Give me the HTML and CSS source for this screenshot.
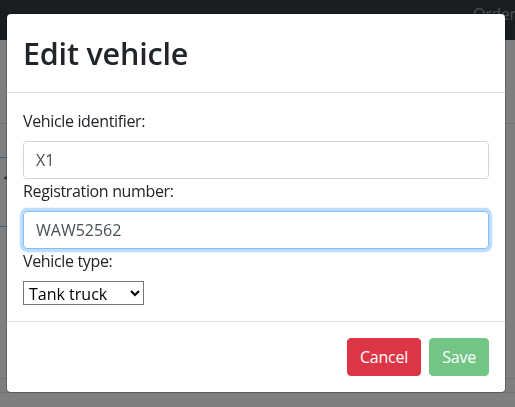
FILE: index.html
```html
<!DOCTYPE html>
<html lang="en">
<head>
<meta charset="utf-8">
<title>Edit vehicle</title>
<link rel="stylesheet" href="styles.css">
</head>
<body>
<nav class="navbar">
  <span class="nav-link">Orders</span>
</nav>
<main class="page">
  <div class="row row-a"></div>
  <div class="row row-b"><span class="pager">&lt;</span></div>
  <div class="row row-c"></div>
  <div class="row row-d"></div>
</main>
<div class="backdrop"></div>
<div class="modal">
  <div class="modal-dialog">
    <div class="modal-content">
      <div class="modal-header">
        <h2 class="modal-title">Edit vehicle</h2>
      </div>
      <div class="modal-body">
        <label class="form-label" for="vid">Vehicle identifier:</label>
        <input class="form-control" id="vid" type="text" value="X1">
        <label class="form-label" for="reg">Registration number:</label>
        <input class="form-control is-focused" id="reg" type="text" value="WAW52562">
        <label class="form-label" for="vtype">Vehicle type:</label>
        <select class="form-select" id="vtype">
          <option>Tank truck</option>
          <option>Box truck</option>
          <option>Trailer</option>
        </select>
      </div>
      <div class="modal-footer">
        <button class="btn btn-danger" type="button">Cancel</button>
        <button class="btn btn-success" type="button" disabled>Save</button>
      </div>
    </div>
  </div>
</div>
</body>
</html>
```
FILE: styles.css
```css
* { box-sizing: border-box; }

body {
  margin: 0;
  font-family: "Segoe UI", "Open Sans", "Noto Sans", sans-serif;
  font-size: 16px;
  line-height: 1.5;
  color: #212529;
  background: #fff;
  overflow: hidden;
}

.navbar {
  height: 40px;
  background: #343a40;
  display: flex;
  justify-content: flex-end;
  padding: 2px 0 0 0;
}

.nav-link {
  color: rgba(255, 255, 255, 0.5);
  margin-right: -8px;
  line-height: 24px;
  letter-spacing: -0.3px;
}

.page {
  padding: 0;
}

.row { border-bottom: 1px solid #dee2e6; }
.row-a { height: 84px; }
.row-b {
  height: 70px;
  margin-top: 33px;
  border: 1px solid #80bdff;
  border-radius: 4px;
  margin-left: -20px;
  width: 40px;
}
.pager {
  display: block;
  padding: 8px 0 0 22px;
  color: #495057;
}
.row-c { height: 152px; }
.row-d { height: 14px; }

.backdrop {
  position: fixed;
  inset: 0;
  background: rgba(0, 0, 0, 0.5);
}

.modal {
  position: fixed;
  inset: 0;
}

.modal-dialog {
  margin: 13px 0 0 6px;
  width: 500px;
}

.modal-content {
  background: #fff;
  border: 1px solid rgba(0, 0, 0, 0.2);
  border-radius: 4.8px;
  background-clip: padding-box;
}

.modal-header {
  padding: 16px;
  border-bottom: 1px solid #dee2e6;
}

.modal-title {
  margin: 0;
  font-size: 30.5px;
  font-weight: 600;
  line-height: 46px;
  letter-spacing: -0.2px;
}

.modal-body {
  padding: 16px;
}

.form-label {
  display: inline-block;
  margin-bottom: 8px;
  letter-spacing: -0.35px;
}

.form-control {
  display: block;
  width: 100%;
  height: 38px;
  padding: 6px 12px;
  font-family: inherit;
  font-size: 16px;
  line-height: 1.5;
  color: #495057;
  background: #fff;
  border: 1px solid #ced4da;
  border-radius: 4px;
  outline: none;
}

.form-control.is-focused {
  border-color: #80bdff;
  box-shadow: 0 0 0 3.2px rgba(0, 123, 255, 0.25);
}

.form-select {
  display: block;
  width: 121px;
  height: 24px;
  font-family: inherit;
  font-size: 16px;
  color: #000;
  background: #fff;
  border: 1px solid #767676;
  border-radius: 0;
  padding: 0 0 0 1px;
}

.modal-footer {
  display: flex;
  justify-content: flex-end;
  align-items: center;
  padding: 12px;
  border-top: 1px solid #dee2e6;
}

.btn {
  margin: 4px;
  padding: 6px 12px;
  font-family: inherit;
  font-size: 16px;
  line-height: 1.5;
  color: #fff;
  border: 1px solid transparent;
  border-radius: 4px;
  letter-spacing: -0.2px;
}

.btn-danger {
  background: #dc3545;
  border-color: #dc3545;
}

.btn-success {
  background: #28a745;
  border-color: #28a745;
  opacity: 0.65;
}
```
